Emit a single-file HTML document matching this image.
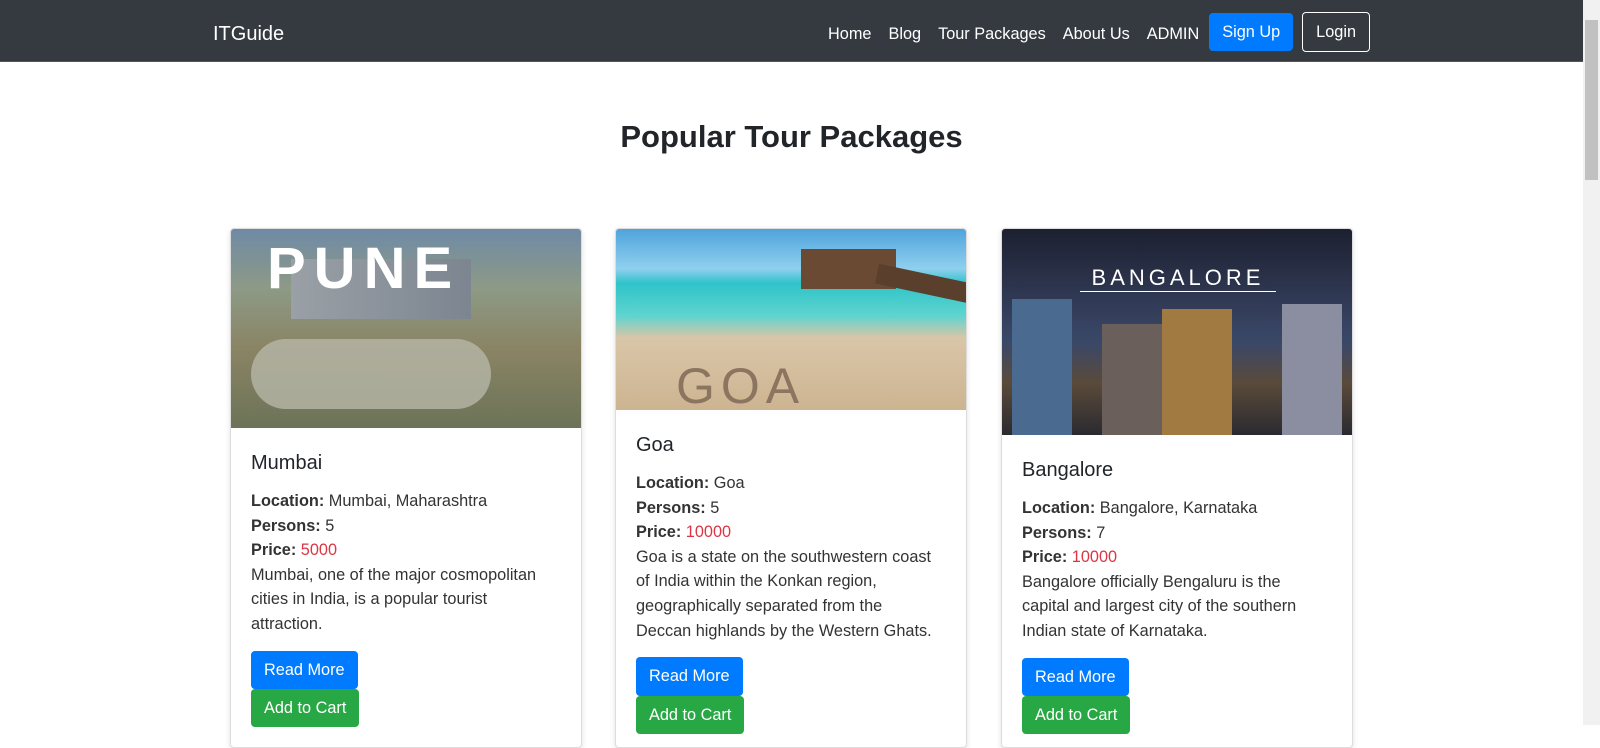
<!DOCTYPE html>
<html><head><meta charset="utf-8"><style>
*{box-sizing:border-box;margin:0;padding:0}
body{width:1600px;height:725px;overflow:hidden;font-family:"Liberation Sans","DejaVu Sans",sans-serif;color:#212529;font-size:16px;line-height:1.5;background:#fff;position:relative}
.nav{position:absolute;left:0;top:0;width:1583px;height:62px;background:#343a40;border-bottom:1px solid #555}
.brand{position:absolute;left:213px;top:19px;color:#fff;font-size:20px}
.links{position:absolute;right:213px;top:12px;display:flex;align-items:center}
.links a{color:#fff;font-size:16.3px;margin-left:17px;text-decoration:none;position:relative;top:2px}
.btn{display:inline-block;padding:7px 13px;border-radius:4px;font-size:16.3px;color:#fff;line-height:1.5;white-space:nowrap}
.su{background:#007bff;margin-left:10px}
.lg{border:1px solid #fff;margin-left:9px}
.scroll{position:absolute;right:0;top:0;width:17px;height:725px;background:#f1f1f1}
.thumb{position:absolute;right:2px;top:20px;width:13px;height:160px;background:#c1c1c1}
h1{position:absolute;top:114px;left:0;width:1583px;text-align:center;font-size:31px;font-weight:bold;}
.card{position:absolute;top:228px;width:352px;height:520px;border:1px solid #ddd;border-radius:4px;box-shadow:0 2px 6px rgba(0,0,0,.12);overflow:hidden;background:#fff}
.img{width:100%;position:relative;overflow:hidden}
.body{padding:20px}
.body h5{font-size:20px;font-weight:500;margin-bottom:11px}
.body p{font-size:16.3px;line-height:24.6px;color:#333;white-space:nowrap}
.red{color:#dc3545}
.rm{background:#007bff;margin-top:14px}
.ac{background:#28a745;margin-top:0;display:block;width:max-content}
</style></head><body>
<div class="nav"><div class="brand">ITGuide</div>
<div class="links"><a>Home</a><a>Blog</a><a>Tour Packages</a><a>About Us</a><a>ADMIN</a><span class="btn su">Sign Up</span><span class="btn lg">Login</span></div></div>
<div class="scroll"><div class="thumb"></div></div>
<h1>Popular Tour Packages</h1>

<div class="card" style="left:230px">
<div class="img" style="height:199px;background:linear-gradient(180deg,#6f8aa6 0%,#8d9a86 30%,#8a8464 60%,#6c7358 100%)">
<div style="position:absolute;left:60px;top:30px;width:180px;height:60px;background:linear-gradient(90deg,#9aa0a6,#7c8590)"></div>
<div style="position:absolute;left:20px;top:110px;width:240px;height:70px;border-radius:40px;background:#b7b6a8;opacity:.8"></div>
<div style="position:absolute;left:36px;top:-4px;color:#fff;font-size:58px;font-weight:bold;letter-spacing:8px">PUNE</div></div>
<div class="body"><h5>Mumbai</h5><p><b>Location:</b> Mumbai, Maharashtra<br><b>Persons:</b> 5<br><b>Price:</b> <span class="red">5000</span><br>Mumbai, one of the major cosmopolitan<br>cities in India, is a popular tourist<br>attraction.</p>
<span class="btn rm">Read More</span><span class="btn ac">Add to Cart</span></div></div>

<div class="card" style="left:615px">
<div class="img" style="height:181px;background:linear-gradient(180deg,#4fa3dc 0%,#8fd0ee 22%,#2fc3c9 30%,#5fd4cf 48%,#d9c6a8 60%,#cdb491 100%)">
<div style="position:absolute;left:185px;top:20px;width:95px;height:40px;background:#6b4a33"></div>
<div style="position:absolute;left:260px;top:45px;width:100px;height:20px;background:#5a3f2c;transform:rotate(12deg)"></div>
<div style="position:absolute;left:60px;top:120px;color:#8b7560;font-size:50px;letter-spacing:6px">GOA</div></div>
<div class="body"><h5>Goa</h5><p><b>Location:</b> Goa<br><b>Persons:</b> 5<br><b>Price:</b> <span class="red">10000</span><br>Goa is a state on the southwestern coast<br>of India within the Konkan region,<br>geographically separated from the<br>Deccan highlands by the Western Ghats.</p>
<span class="btn rm">Read More</span><span class="btn ac">Add to Cart</span></div></div>

<div class="card" style="left:1001px">
<div class="img" style="height:206px;background:linear-gradient(180deg,#1c2030 0%,#313a55 35%,#3a4868 55%,#5a4a3a 75%,#2a2a30 100%)">
<div style="position:absolute;left:10px;top:70px;width:60px;height:136px;background:#4a6a90"></div>
<div style="position:absolute;left:100px;top:95px;width:60px;height:111px;background:#6a5f5a"></div>
<div style="position:absolute;left:160px;top:80px;width:70px;height:126px;background:#a07a40"></div>
<div style="position:absolute;left:280px;top:75px;width:60px;height:131px;background:#8a8ea0"></div>
<div style="position:absolute;left:0;top:32px;width:352px;text-align:center;color:#fff;font-size:22px;letter-spacing:4px">BANGALORE</div>
<div style="position:absolute;left:78px;top:62px;width:196px;height:1px;background:#fff"></div></div>
<div class="body"><h5>Bangalore</h5><p><b>Location:</b> Bangalore, Karnataka<br><b>Persons:</b> 7<br><b>Price:</b> <span class="red">10000</span><br>Bangalore officially Bengaluru is the<br>capital and largest city of the southern<br>Indian state of Karnataka.</p>
<span class="btn rm">Read More</span><span class="btn ac">Add to Cart</span></div></div>
</body></html>
